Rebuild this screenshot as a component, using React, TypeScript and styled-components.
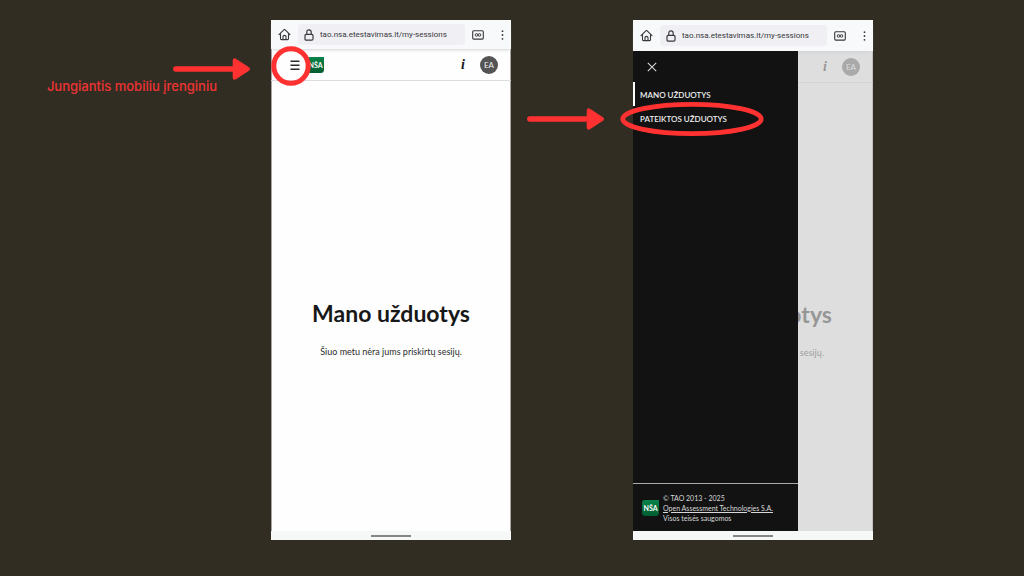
import React from "react";
import styled, { createGlobalStyle } from "styled-components";

const GlobalStyle = createGlobalStyle`
  *, *::before, *::after { box-sizing: border-box; }
  body { margin: 0; background: #322d23; }
  button { font: inherit; color: inherit; background: none; border: 0; padding: 0; cursor: pointer; }
`;

const uiFont = `Lato, "Noto Sans", sans-serif`;
const red = "#ff3131";

const Stage = styled.div`
  display: grid;
  grid-template-columns: 271fr 240px 122fr 240px 151fr;
  min-height: 100vh;
  padding: 20px 0 36px;
  background: #322d23;
`;

const Note = styled.div<{ $top: number; $right: number }>`
  display: flex;
  flex-direction: column;
  align-items: flex-end;
  padding: ${(p) => p.$top}px ${(p) => p.$right}px 0 0;
`;

const NoteText = styled.p`
  margin: 0 33px 0 0;
  font: 500 13px/12px Inter, "Liberation Sans", sans-serif;
  color: #ee3333;
  white-space: nowrap;
`;

const ArrowDrawing = styled.svg`
  display: block;
  width: 77px;
  height: 22px;
`;

const Phone = styled.section`
  position: relative;
  display: flex;
  flex-direction: column;
  background: #fefefe;
  box-shadow: inset 0 0 0 1px #a5a4a0;
`;

const BrowserBar = styled.div<{ $height: number }>`
  position: relative;
  display: flex;
  align-items: center;
  height: ${(p) => p.$height}px;
  padding: 0 5px 0 7px;
  background: #f8f9fa;
  color: #38383d;
  box-shadow: 0 3px 3px -2px #d0d1d5;
  z-index: 1;
`;

const IconButton = styled.button<{ $width: number }>`
  display: flex;
  align-items: center;
  justify-content: center;
  flex: none;
  width: ${(p) => p.$width}px;
  height: 18px;
`;

const BarActions = styled.div`
  display: flex;
  gap: 12px;
`;

const Address = styled.label`
  display: flex;
  flex: 1;
  align-items: center;
  gap: 6px;
  min-width: 0;
  height: 21px;
  margin: 0 5px 0 7px;
  padding-left: 6px;
  border-radius: 4px;
  background: #f0f0f4;
`;

const AddressInput = styled.input`
  flex: 1;
  min-width: 0;
  padding: 0;
  border: 0;
  outline: 0;
  background: none;
  color: #38383d;
  font: 400 8px/16px Roboto, sans-serif;
`;

const Screen = styled.div`
  position: relative;
  display: flex;
  flex: 1;
  flex-direction: column;
`;

const AppHeader = styled.header`
  display: flex;
  align-items: center;
  height: 32px;
  padding: 0 13px 0 18px;
  border-bottom: 1px solid #dcdcdc;
`;

const LogoSlot = styled.div`
  display: flex;
  flex: 1;
  padding-left: 6px;
`;

const InfoButton = styled.button`
  width: 16px;
  margin-right: 9px;
  font: italic 700 14px/16px "Liberation Serif", serif;
  color: #181818;
`;

const Avatar = styled.button`
  width: 18px;
  height: 18px;
  border-radius: 50%;
  background: #555454;
  color: #f2f2f2;
  font: 400 8px/18px ${uiFont};
`;

const Main = styled.main`
  display: flex;
  flex: 1;
  flex-direction: column;
  align-items: center;
  justify-content: center;
  gap: 16px;
  padding-top: 45px;
`;

const Title = styled.h1`
  margin: 0;
  color: #181818;
  font: 700 23px/30px ${uiFont};
  white-space: nowrap;
`;

const Message = styled.p`
  margin: 0;
  color: #2c2c2c;
  font: 400 9px/16px ${uiFont};
  white-space: nowrap;
`;

const HomeIndicator = styled.div`
  display: flex;
  align-items: center;
  justify-content: center;
  height: 9px;
  background: #f6f8f8;

  &::before {
    content: "";
    width: 40px;
    height: 2px;
    background: #858585;
  }
`;

const Scrim = styled.div`
  position: absolute;
  inset: 0;
  background: rgba(207, 207, 207, 0.69);
`;

const Drawer = styled.aside`
  position: absolute;
  inset: 0 auto 0 0;
  z-index: 1;
  display: flex;
  flex-direction: column;
  width: 165px;
  background: #121212;
  color: #eee;
`;

const DrawerTop = styled.div`
  display: flex;
  align-items: center;
  height: 31px;
  padding-left: 10px;
`;

const DrawerNav = styled.nav`
  display: flex;
  flex: 1;
  flex-direction: column;
`;

const DrawerLink = styled.a<{ $active?: boolean }>`
  border-left: 2px solid ${(p) => (p.$active ? "#fff" : "transparent")};
  padding: 2px 0 0 5px;
  color: #f0f0f0;
  font: 600 8px/22px ${uiFont};
  text-decoration: none;
`;

const DrawerFooter = styled.footer`
  display: flex;
  align-items: center;
  gap: 4px;
  height: 48px;
  padding-left: 9px;
  border-top: 1px solid #a8a8a8;
`;

const Legal = styled.p`
  margin: 0;
  color: #d8d8d8;
  font: 400 7px/10px ${uiFont};
  white-space: nowrap;
`;

const LegalLink = styled.a`
  color: inherit;
  text-decoration: underline;
`;

const CircleMark = styled.svg`
  position: absolute;
  left: 0;
  top: 26px;
  z-index: 2;
  width: 40px;
  height: 40px;
  pointer-events: none;
`;

const EllipseMark = styled.svg`
  position: absolute;
  left: -13px;
  top: 82px;
  z-index: 2;
  width: 144px;
  height: 34px;
  pointer-events: none;
`;

const Arrow = () => (
  <ArrowDrawing viewBox="0 0 77 22" aria-hidden="true">
    <path d="M2.8 11H64" stroke={red} strokeWidth="5.4" strokeLinecap="round" />
    <path d="M61.8 2.4L74.8 11L61.8 19.6Z" fill={red} stroke={red} strokeWidth="4.2" strokeLinejoin="round" />
  </ArrowDrawing>
);

const HomeIcon = () => (
  <svg width="13" height="13" viewBox="0 0 13 13" fill="none" stroke="currentColor" strokeWidth="1.1" strokeLinejoin="round" strokeLinecap="round">
    <path d="M1 6.7L6.1 1.6Q6.5 1.2 6.9 1.6L12 6.7M2.5 5.6V10.7Q2.5 11.6 3.4 11.6H9.6Q10.5 11.6 10.5 10.7V5.6" />
    <path d="M5 11.5V8.4Q5 7.4 6.5 7.4Q8 7.4 8 8.4V11.5" />
  </svg>
);

const LockIcon = () => (
  <svg width="10" height="12" viewBox="0 0 10 12" fill="none" stroke="currentColor" strokeWidth="1.2">
    <rect x="1" y="5.4" width="8" height="5.8" rx="1.2" />
    <path d="M2.8 5.3V3Q2.8 0.8 5 0.8Q7.2 0.8 7.2 3V5.3" />
  </svg>
);

const TabsIcon = () => (
  <svg width="12" height="10" viewBox="0 0 12 10" fill="none" stroke="currentColor">
    <rect x="0.7" y="0.7" width="10.6" height="8.4" rx="1" strokeWidth="1.1" />
    <circle cx="4.5" cy="4.9" r="1.3" strokeWidth="1" />
    <circle cx="7.5" cy="4.9" r="1.3" strokeWidth="1" />
  </svg>
);

const DotsIcon = () => (
  <svg width="3" height="10" viewBox="0 0 3 10" fill="currentColor">
    <circle cx="1.5" cy="1.2" r="0.9" />
    <circle cx="1.5" cy="5" r="0.9" />
    <circle cx="1.5" cy="8.8" r="0.9" />
  </svg>
);

const MenuIcon = () => (
  <svg width="10" height="10" viewBox="0 0 10 10" stroke="#2a2a2a" strokeWidth="1.4">
    <path d="M0.5 1.2H9.5M0.5 5.2H9.5M0.5 9.2H9.5" />
  </svg>
);

const CloseIcon = () => (
  <svg width="10" height="10" viewBox="0 0 10 10" stroke="#d6d6d6" strokeWidth="1.1">
    <path d="M0.8 0.8L9.2 9.2M9.2 0.8L0.8 9.2" />
  </svg>
);

const Logo = () => (
  <svg width="17" height="16" viewBox="0 0 17 16" role="img" aria-label="NŠA">
    <defs>
      <linearGradient id="logoGreen" x1="0" y1="0" x2="0" y2="1">
        <stop offset="0" stopColor="#08834a" />
        <stop offset="1" stopColor="#025c31" />
      </linearGradient>
    </defs>
    <path d="M3 0H17V12.5Q17 16 13.5 16H3.5Q0 16 0 12.5V3Q0 0 3 0Z" fill="url(#logoGreen)" />
    <text x="8.5" y="11" textAnchor="middle" fontFamily="Lato, sans-serif" fontWeight="700" fontSize="7" fill="#fff">
      NŠA
    </text>
  </svg>
);

type PhoneViewProps = { barHeight: number; drawer?: boolean; children?: React.ReactNode };

const PhoneView = ({ barHeight, drawer, children }: PhoneViewProps) => (
  <Phone>
    <BrowserBar $height={barHeight}>
      <IconButton $width={13} aria-label="Pradžia"><HomeIcon /></IconButton>
      <Address>
        <LockIcon />
        <AddressInput aria-label="Adresas" readOnly value="tao.nsa.etestavimas.lt/my-sessions" />
      </Address>
      <BarActions>
        <IconButton $width={16} aria-label="Kortelės"><TabsIcon /></IconButton>
        <IconButton $width={8} aria-label="Daugiau"><DotsIcon /></IconButton>
      </BarActions>
    </BrowserBar>
    <Screen>
      <AppHeader>
        <IconButton $width={12} aria-label="Meniu"><MenuIcon /></IconButton>
        <LogoSlot><Logo /></LogoSlot>
        <InfoButton aria-label="Informacija">i</InfoButton>
        <Avatar>EA</Avatar>
      </AppHeader>
      <Main>
        <Title>Mano užduotys</Title>
        <Message>Šiuo metu nėra jums priskirtų sesijų.</Message>
      </Main>
      {drawer && (
        <>
          <Scrim />
          <Drawer>
            <DrawerTop>
              <IconButton $width={18} aria-label="Uždaryti"><CloseIcon /></IconButton>
            </DrawerTop>
            <DrawerNav>
              <DrawerLink href="#mano" $active>MANO UŽDUOTYS</DrawerLink>
              <DrawerLink href="#pateiktos">PATEIKTOS UŽDUOTYS</DrawerLink>
            </DrawerNav>
            <DrawerFooter>
              <Logo />
              <Legal>
                © TAO 2013 - 2025<br />
                <LegalLink href="#oat">Open Assessment Technologies S.A.</LegalLink><br />
                Visos teisės saugomos
              </Legal>
            </DrawerFooter>
          </Drawer>
        </>
      )}
    </Screen>
    <HomeIndicator />
    {children}
  </Phone>
);

export default function App() {
  return (
    <>
      <GlobalStyle />
      <Stage>
        <Note $top={38} $right={21}>
          <Arrow />
          <NoteText>Jungiantis mobiliu įrenginiu</NoteText>
        </Note>
        <PhoneView barHeight={29}>
          <CircleMark viewBox="0 0 40 40" aria-hidden="true">
            <circle cx="20" cy="20" r="17.2" fill="none" stroke={red} strokeWidth="5" />
          </CircleMark>
        </PhoneView>
        <Note $top={88} $right={29}>
          <Arrow />
        </Note>
        <PhoneView barHeight={31} drawer>
          <EllipseMark viewBox="0 0 144 34" aria-hidden="true">
            <ellipse cx="72" cy="17" rx="69.2" ry="14.6" fill="none" stroke={red} strokeWidth="4.8" />
          </EllipseMark>
        </PhoneView>
      </Stage>
    </>
  );
}
